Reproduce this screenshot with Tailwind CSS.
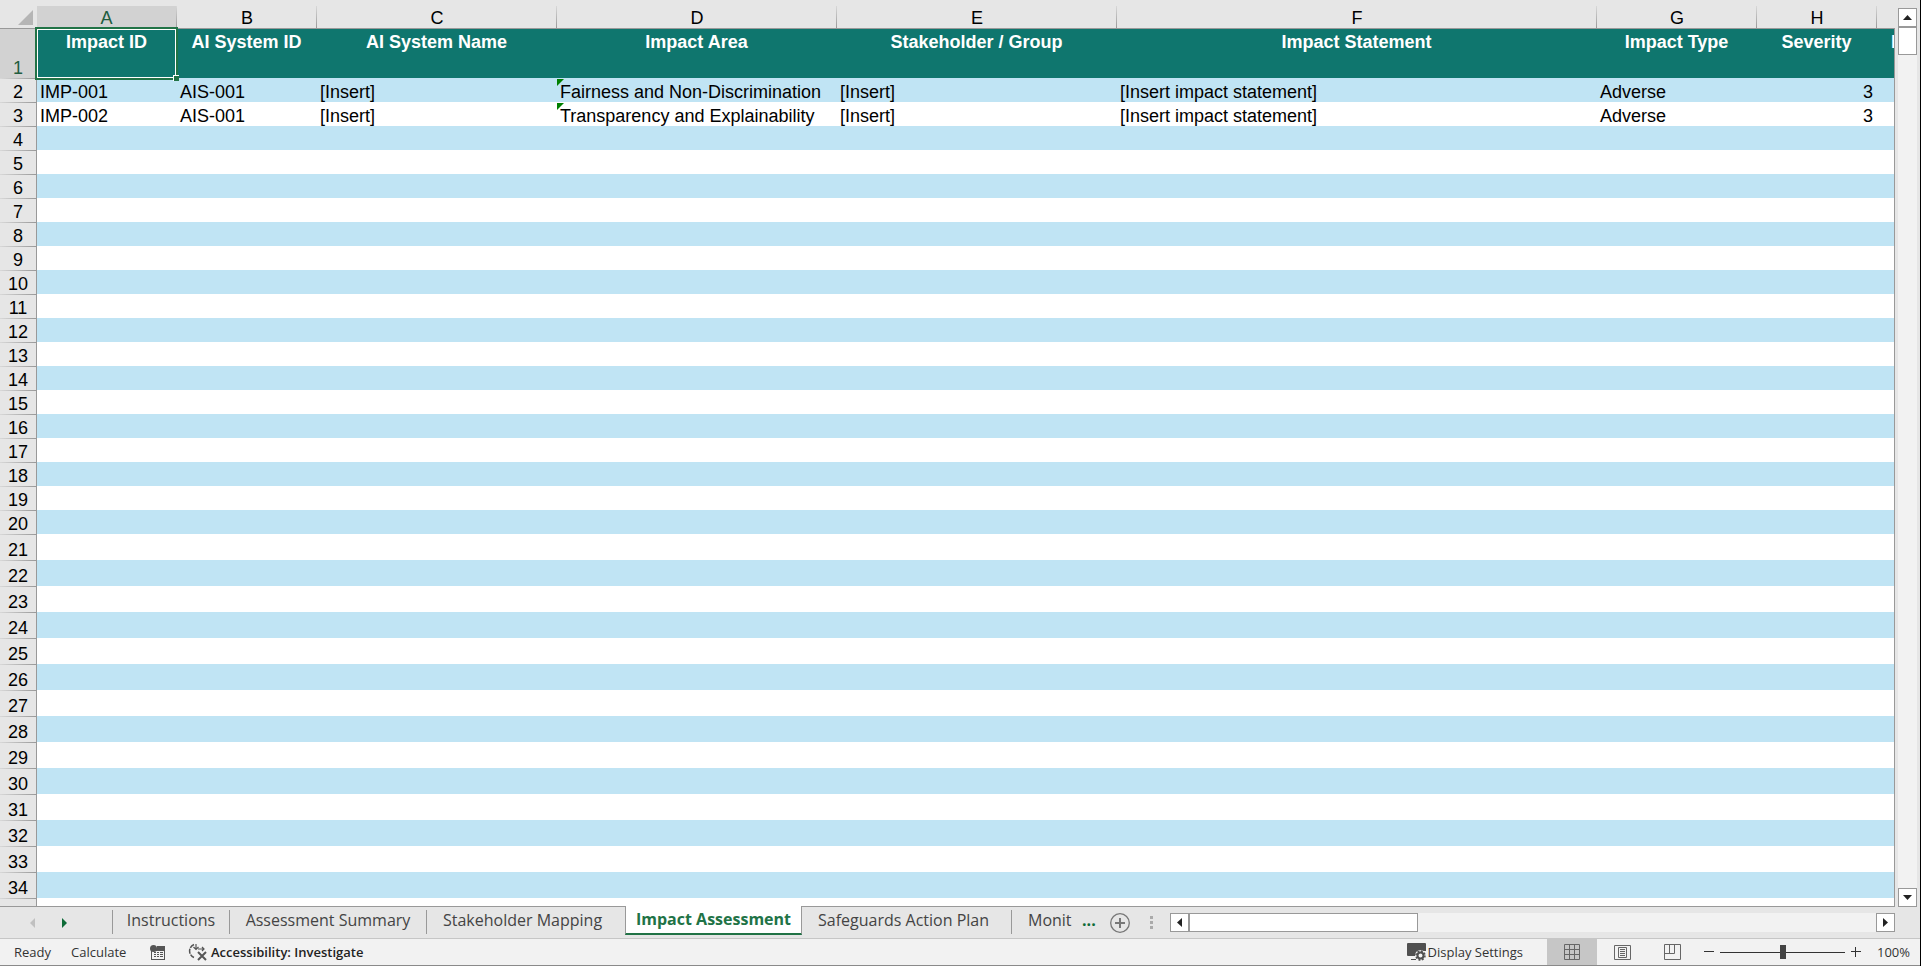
<!DOCTYPE html>
<html lang="en">
<head>
    <meta charset="utf-8" />
    <meta name="viewport" content="width=device-width, initial-scale=1" />
    <title>Impact Assessment</title>
    <script src="https://cdn.jsdelivr.net/npm/@tailwindcss/browser@4"></script>
</head>
<body class="flex flex-col h-screen overflow-hidden bg-[#e6e6e6] border-r border-black font-['Liberation_Sans',sans-serif] text-black">
    <main class="flex flex-1 min-h-0">
        <!-- Sheet grid -->
        <div class="relative flex-1 min-w-0 overflow-hidden">
            <table
                class="w-full table-fixed border-separate border-spacing-0 text-[18px] leading-5 whitespace-nowrap
                    [&_thead_th]:h-[29px] [&_thead_th]:p-0 [&_thead_th]:align-bottom [&_thead_th]:font-normal [&_thead_th]:border-b [&_thead_th]:border-[#999999]
                    [&_thead_th]:bg-[linear-gradient(to_bottom,#d8d8d8,#999999)] [&_thead_th]:bg-[length:1px_22px] [&_thead_th]:bg-[position:right_bottom] [&_thead_th]:bg-no-repeat
                    [&_tbody_th]:p-0 [&_tbody_th]:align-bottom [&_tbody_th]:font-normal [&_tbody_th]:bg-[#e6e6e6] [&_tbody_th]:border-r [&_tbody_th]:border-[#999999]
                    [&_tbody_th]:bg-[linear-gradient(to_right,#d8d8d8,#999999)] [&_tbody_th]:bg-[length:100%_1px] [&_tbody_th]:bg-no-repeat
                    [&_td]:relative [&_td]:overflow-hidden [&_td]:py-0 [&_td]:pl-[3px] [&_td]:pr-1 [&_td]:align-bottom"
            >
                <colgroup>
                    <col class="w-[37px]" />
                    <col class="w-[140px]" />
                    <col class="w-[140px]" />
                    <col class="w-[240px]" />
                    <col class="w-[280px]" />
                    <col class="w-[280px]" />
                    <col class="w-[480px]" />
                    <col class="w-[160px]" />
                    <col class="w-[120px]" />
                    <col />
                </colgroup>
                <thead>
                    <tr>
                        <th class="bg-none!">
                            <button type="button" aria-label="Select all" class="block ml-auto mr-1 mb-[3px]">
                                <svg width="15" height="15" viewBox="0 0 15 15" class="block"><path d="M15 0V15H0z" fill="#b5b5b5" /></svg>
                            </button>
                        </th>
                        <th scope="col"><div class="h-[22px] pt-0.5 mr-px bg-[#d2d2d2] text-[#215c3e]">A</div></th>
                        <th scope="col">B</th>
                        <th scope="col">C</th>
                        <th scope="col">D</th>
                        <th scope="col">E</th>
                        <th scope="col">F</th>
                        <th scope="col">G</th>
                        <th scope="col">H</th>
                        <th scope="col" class="bg-none!"></th>
                    </tr>
                </thead>
                <tbody id="sheet-rows">
                    <tr class="h-[49px] bg-[#0f766e] text-white font-bold text-center [&_td]:align-top! [&_td]:pt-[3px]!">
                        <th scope="row" class="bg-none! bg-[#d2d2d2]! text-[#215c3e]">1</th>
                        <td>Impact ID</td>
                        <td>AI System ID</td>
                        <td>AI System Name</td>
                        <td>Impact Area</td>
                        <td>Stakeholder / Group</td>
                        <td>Impact Statement</td>
                        <td>Impact Type</td>
                        <td>Severity</td>
                        <td class="pl-[14px]! text-left">Likelihood</td>
                    </tr>
                    <tr class="h-6 bg-[#c0e4f4]">
                        <th scope="row">2</th>
                        <td>IMP-001</td>
                        <td>AIS-001</td>
                        <td>[Insert]</td>
                        <td><i class="absolute left-0 top-px size-[7px] bg-[#008000] [clip-path:polygon(0_0,100%_0,0_100%)]"></i>Fairness and Non-Discrimination</td>
                        <td>[Insert]</td>
                        <td>[Insert impact statement]</td>
                        <td>Adverse</td>
                        <td class="text-right">3</td>
                        <td></td>
                    </tr>
                    <tr class="h-6 bg-white">
                        <th scope="row">3</th>
                        <td>IMP-002</td>
                        <td>AIS-001</td>
                        <td>[Insert]</td>
                        <td><i class="absolute left-0 top-px size-[7px] bg-[#008000] [clip-path:polygon(0_0,100%_0,0_100%)]"></i>Transparency and Explainability</td>
                        <td>[Insert]</td>
                        <td>[Insert impact statement]</td>
                        <td>Adverse</td>
                        <td class="text-right">3</td>
                        <td></td>
                    </tr>
                </tbody>
            </table>
            <!-- Selected cell A1 -->
            <div class="absolute left-[35px] top-[27px] w-[143px] h-[53px] border-2 border-[#217346] pointer-events-none">
                <div class="h-full border border-white"></div>
                <div class="absolute -right-[3px] -bottom-[3px] size-[6px] border-l border-t border-white bg-[#217346]"></div>
            </div>
        </div>
        <!-- Vertical scroll bar -->
        <div class="flex flex-col w-[25px] shrink-0 px-[3px] pt-2 relative">
            <div class="absolute left-0 top-7 bottom-0 w-px -ml-px bg-[#999999]"></div>
            <div class="flex flex-col flex-1 bg-[#f2f2f2] -mb-px z-10">
                <button type="button" aria-label="Scroll up" class="grid place-items-center h-[19px] bg-white border border-[#999999]">
                    <svg width="9" height="5" viewBox="0 0 9 5"><path d="M4.500 0L9 5H0z" fill="#222" /></svg>
                </button>
                <div class="h-7 bg-white border border-[#999999]"></div>
                <button type="button" aria-label="Scroll down" class="grid place-items-center h-[19px] mt-auto bg-white border border-[#999999]">
                    <svg width="9" height="5" viewBox="0 0 9 5"><path d="M0 0H9L4.500 5z" fill="#222" /></svg>
                </button>
            </div>
        </div>
    </main>

    <!-- Sheet tabs -->
    <div class="flex h-[33px] shrink-0 border-b border-[#c6c6c6] font-['Open_Sans',sans-serif] text-[16px] leading-5 text-[#444444]">
        <div class="flex flex-1 min-w-0 mr-[25px] border-t border-[#999999]">
            <div class="flex items-center w-28 shrink-0 pl-[30px] gap-[27px]">
                <button type="button" aria-label="Previous sheet"><svg width="5" height="10" viewBox="0 0 5 10"><path d="M5 0V10L0 5z" fill="#c0c0c0" /></svg></button>
                <button type="button" aria-label="Next sheet"><svg width="5" height="10" viewBox="0 0 5 10"><path d="M0 0V10L5 5z" fill="#0e6b38" /></svg></button>
            </div>
            <nav class="flex shrink-0 whitespace-nowrap [&_button]:pb-1">
                <button type="button" class="w-[118px] h-6 mt-[3px] border-x border-[#999999]">Instructions</button>
                <button type="button" class="w-[197px] h-6 mt-[3px] border-r border-[#999999]">Assessment Summary</button>
                <button type="button" class="w-[198px] h-6 mt-[3px] pl-4 text-left">Stakeholder Mapping</button>
                <button type="button" aria-current="page" class="w-[177px] h-[29px] -mt-px pt-0.5 border-x border-x-[#999999] border-b-2 border-b-[#217346] bg-white font-bold text-[#217346]">Impact Assessment</button>
                <button type="button" class="w-[210px] h-6 mt-[3px] pl-4 border-r border-[#999999] text-left">Safeguards Action Plan</button>
                <button type="button" class="w-[62px] h-6 mt-[3px] pl-4 overflow-hidden text-left">Monit</button>
                <button type="button" aria-label="More sheets" class="h-6 mt-[3px] pl-2 font-bold text-[#0e6b38]">...</button>
            </nav>
            <button type="button" aria-label="New sheet" class="ml-3.5 shrink-0">
                <svg width="20" height="20" viewBox="0 0 20 20" fill="none" stroke="#777"><circle cx="10" cy="10" r="9.300" stroke-width="1.300" /><path d="M5 10H15M10 5V15" stroke-width="2" /></svg>
            </button>
            <svg width="3" height="13" viewBox="0 0 3 13" fill="#aaa" class="ml-5 mr-[17px] self-center shrink-0"><path d="M0 0h3v3H0zM0 5h3v3H0zM0 10h3v3H0z" /></svg>
            <!-- Horizontal scroll bar -->
            <div class="flex flex-1 min-w-0 h-[19px] mt-1.5 bg-[#f2f2f2]">
                <button type="button" aria-label="Scroll left" class="grid place-items-center w-[19px] bg-white border border-[#999999]">
                    <svg width="5" height="9" viewBox="0 0 5 9"><path d="M5 0V9L0 4.500z" fill="#222" /></svg>
                </button>
                <div class="w-[229px] bg-white border border-[#999999]"></div>
                <button type="button" aria-label="Scroll right" class="grid place-items-center w-[19px] ml-auto bg-white border border-[#999999]">
                    <svg width="5" height="9" viewBox="0 0 5 9"><path d="M0 0V9L5 4.500z" fill="#222" /></svg>
                </button>
            </div>
        </div>
    </div>

    <!-- Status bar -->
    <footer class="flex items-center h-[27px] shrink-0 bg-[#f2f2f2] border-b border-[#8a8a8a] font-['Open_Sans',sans-serif] text-[13px] leading-4 text-[#333333] whitespace-nowrap">
        <span class="ml-3.5 w-[57px]">Ready</span>
        <button type="button" class="w-[79px] text-left">Calculate</button>
        <button type="button" aria-label="Record macro" class="w-[38px]">
            <svg width="15" height="15" viewBox="0 0 15 15" fill="#555"><path d="M1 4H15V15H1zM2 6V14H14V6z" fill-rule="evenodd" /><path d="M7 1H15V5H7z" /><circle cx="3.500" cy="3.500" r="3.500" /><path d="M4 7h2v1H4zM7 7h2v1H7zM10 7h3v1h-3zM4 9h2v1H4zM7 9h2v1H7zM10 9h3v1h-3zM4 11h2v1H4zM7 11h2v1H7zM10 11h3v1h-3z" /></svg>
        </button>
        <button type="button" class="flex items-center gap-[3px] font-semibold">
            <svg width="20" height="18" viewBox="0 0 20 18" fill="none" stroke="#555" stroke-width="1.500"><path d="M6 1.500A7 7 0 0 0 6 14.500" stroke-dasharray="5 1" /><path d="M8 1V6M5.500 4L8 6.500L10.500 4M10 6H16M14 4L16 6L14 8" stroke-width="1.200" /><path d="M10 9L18 17M18 9L10 17" stroke-width="2" /></svg>
            <span class="text-[#222222]">Accessibility: Investigate</span>
        </button>
        <button type="button" class="flex items-center gap-0.5 ml-auto mr-6">
            <svg width="19" height="18" viewBox="0 0 19 18"><path d="M1 0H18Q19 0 19 1V8H12L8 13H1Q0 13 0 12V1Q0 0 1 0zM4 16H9V17H4z" fill="#505050" /><circle cx="13.500" cy="12.500" r="5.500" fill="#f2f2f2" /><circle cx="13.500" cy="12.500" r="3" fill="none" stroke="#505050" stroke-width="2" /><circle cx="13.500" cy="12.500" r="4.500" fill="none" stroke="#505050" stroke-width="1.500" stroke-dasharray="2 1.500" /></svg>
            <span>Display Settings</span>
        </button>
        <button type="button" aria-label="Normal view" class="grid place-items-center w-[50px] h-full bg-[#c6c6c6]">
            <svg width="16" height="16" viewBox="0 0 16 16" fill="none" stroke="#666"><path d="M.5.5H15.500V15.500H.5zM5.500.5V15.500M10.500.5V15.500M.5 5.500H15.500M.5 10.500H15.500" /></svg>
        </button>
        <button type="button" aria-label="Page layout view" class="grid place-items-center w-[50px] h-full">
            <svg width="17" height="15" viewBox="0 0 17 15" fill="none" stroke="#666"><path d="M.5.5H16.500V14.500H.5zM4.500 2.500H12.500V12.500H4.500zM6 4.500H11M6 6.500H11M6 8.500H11M6 10.500H11" /></svg>
        </button>
        <button type="button" aria-label="Page break preview" class="grid place-items-center w-[50px] h-full">
            <svg width="17" height="16" viewBox="0 0 17 16" fill="none" stroke="#666"><path d="M.5.5H16.500V15.500H.5zM.5 9.500H10.500V.5M5.500.5V9.500" /></svg>
        </button>
        <button type="button" aria-label="Zoom out" class="ml-[7px]"><svg width="10" height="10" viewBox="0 0 10 10"><path d="M0 4.500H10" stroke="#333" /></svg></button>
        <input
            type="range"
            aria-label="Zoom"
            min="0"
            max="200"
            value="100"
            class="w-[125px] h-3.5 ml-1.5 mr-1.5 appearance-none bg-[linear-gradient(#333,#333)] bg-[length:100%_1px] bg-center bg-no-repeat [&::-webkit-slider-thumb]:appearance-none [&::-webkit-slider-thumb]:w-1.5 [&::-webkit-slider-thumb]:h-3.5 [&::-webkit-slider-thumb]:bg-[#444444]"
        />
        <button type="button" aria-label="Zoom in"><svg width="10" height="10" viewBox="0 0 10 10"><path d="M0 4.500H10M4.500 0V10" stroke="#333" /></svg></button>
        <button type="button" class="w-[47px] ml-3 pl-1 text-left">100%</button>
    </footer>

    <script>
        // Empty banded rows below the data; rows past 20 are slightly taller
        const rows = document.getElementById("sheet-rows");
        for (let n = 4; n <= 35; n++) {
            const tr = rows.insertRow();
            tr.className = n > 20 ? "h-[26px] even:bg-[#c0e4f4] odd:bg-white" : "h-6 even:bg-[#c0e4f4] odd:bg-white";
            tr.innerHTML = `<th scope="row">${n < 35 ? n : ""}</th>` + "<td></td>".repeat(9);
        }
    </script>
</body>
</html>
